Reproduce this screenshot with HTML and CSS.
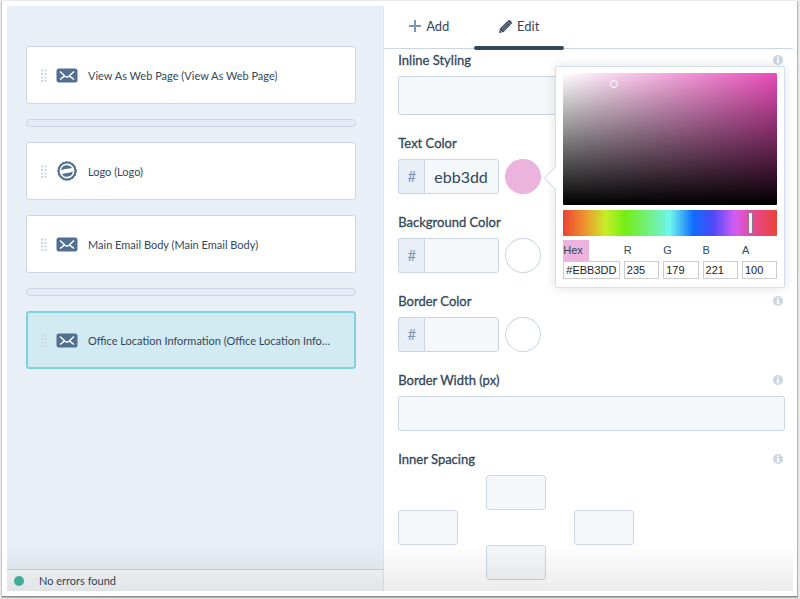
FILE: index.html
```html
<!DOCTYPE html>
<html lang="en">
<head>
    <meta charset="UTF-8">
    <meta name="viewport" content="width=device-width, initial-scale=1.0">
    <title>Email Editor</title>
    <link rel="stylesheet" href="styles.css">
</head>
<body>
    <svg width="0" height="0" class="sprite" aria-hidden="true">
        <symbol id="icon-mail" viewBox="0 0 22 15">
            <rect x="0.5" y="0.5" width="21" height="14" rx="2.5" fill="#516f90"/>
            <path d="M4 3.5l4.6 4.2M18 3.5l-4.6 4.2M4 11.5l4-3.2M18 11.5l-4-3.2M8 7.3c1.6 2.4 4.400 2.4 6 0" fill="none" stroke="#fff" stroke-width="1.5"/>
        </symbol>
        <symbol id="icon-drag" viewBox="0 0 6 13">
            <path d="M0 .5h2v2H0zM3.500 .5h2v2h-2zM0 4h2v2H0zM3.500 4h2v2h-2zM0 7.500h2v2H0zM3.500 7.500h2v2h-2zM0 11h2v2H0zM3.500 11h2v2h-2z" fill="#cbd6e2"/>
        </symbol>
        <symbol id="icon-info" viewBox="0 0 10 10">
            <circle cx="5" cy="5" r="5" fill="#cbd6e2"/>
            <path d="M4.200 1.600h1.700v1.500H4.200zM3.600 4h2.300v3.200h.6v1H3.600v-1h.6V5h-.6z" fill="#fff"/>
        </symbol>
    </svg>

    <div class="window">
        <div class="app">
            <section class="modules">
                <div class="module-list">
                    <div class="module">
                        <svg class="drag"><use href="#icon-drag"/></svg>
                        <svg class="module-icon"><use href="#icon-mail"/></svg>
                        <span class="module-name">View As Web Page (View As Web Page)</span>
                    </div>
                    <div class="divider"></div>
                    <div class="module">
                        <svg class="drag"><use href="#icon-drag"/></svg>
                        <svg class="module-icon logo" viewBox="0 0 20 20">
                            <circle cx="10" cy="10" r="8.400" fill="#fff" stroke="#516f90" stroke-width="2"/>
                            <circle cx="10" cy="10" r="9.300" fill="none" stroke="#516f90" stroke-width="1" stroke-dasharray="2 1.500"/>
                            <path d="M4.200 9.400C4.500 6 7 4.200 10 4.200c2.200 0 4 1 5 2.600-3 1.300-7 .6-10.800 2.600z" fill="#516f90"/>
                            <path d="M15.800 10.600c-.3 3.400-2.800 5.200-5.800 5.200-2.200 0-4-1-5-2.600 3-1.300 7-.6 10.800-2.600z" fill="#516f90"/>
                        </svg>
                        <span class="module-name">Logo (Logo)</span>
                    </div>
                    <div class="module">
                        <svg class="drag"><use href="#icon-drag"/></svg>
                        <svg class="module-icon"><use href="#icon-mail"/></svg>
                        <span class="module-name">Main Email Body (Main Email Body)</span>
                    </div>
                    <div class="divider"></div>
                    <div class="module selected">
                        <svg class="drag"><use href="#icon-drag"/></svg>
                        <svg class="module-icon"><use href="#icon-mail"/></svg>
                        <span class="module-name">Office Location Information (Office Location Information)</span>
                    </div>
                </div>
                <footer class="status"><span class="status-dot"></span>No errors found</footer>
            </section>

            <section class="editor">
                <nav class="tabs">
                    <button class="tab" type="button">
                        <svg width="12" height="12" viewBox="0 0 12 12"><path d="M6 0v12M0 6h12" stroke="#7c98b6" stroke-width="2"/></svg>
                        Add
                    </button>
                    <button class="tab active" type="button">
                        <svg width="13" height="13" viewBox="0 0 13 13">
                            <path d="M0 13l1-4.500L8.200 1.300l3.500 3.500L4.500 12z" fill="#33475b"/>
                            <path d="M9 .6c.7-.7 1.500-.7 2.200 0l1.200 1.200c.7.700.7 1.500 0 2.200l-.5.500L8.500 1.100z" fill="#33475b"/>
                            <path d="M2.500 9.200l6-6M3.900 10.600l6-6" stroke="#b4c0cc" stroke-width=".7"/>
                            <path d="M1.200 10.300l1.500 1.500" stroke="#fff" stroke-width=".7"/>
                        </svg>
                        Edit
                    </button>
                </nav>

                <form class="fields">
                    <div class="field">
                        <div class="field-head">
                            <label for="inline-styling">Inline Styling</label>
                            <svg class="info"><use href="#icon-info"/></svg>
                        </div>
                        <input class="box tall" type="text" id="inline-styling">
                    </div>

                    <div class="field">
                        <div class="field-head">
                            <label for="text-color">Text Color</label>
                        </div>
                        <div class="color-row">
                            <span class="hash">#</span>
                            <input class="box color-input" type="text" id="text-color" value="ebb3dd">
                            <button class="swatch filled" type="button" aria-label="Pick text color"></button>

                            <div class="picker">
                                <div class="saturation"><span class="handle"></span></div>
                                <div class="hue"><span class="slider"></span></div>
                                <div class="values">
                                    <div class="value">
                                        <label class="hex-label" for="hex">Hex</label>
                                        <input type="text" id="hex" value="#EBB3DD">
                                    </div>
                                    <div class="value">
                                        <label for="red">R</label>
                                        <input type="text" id="red" value="235">
                                    </div>
                                    <div class="value">
                                        <label for="green">G</label>
                                        <input type="text" id="green" value="179">
                                    </div>
                                    <div class="value">
                                        <label for="blue">B</label>
                                        <input type="text" id="blue" value="221">
                                    </div>
                                    <div class="value">
                                        <label for="alpha">A</label>
                                        <input type="text" id="alpha" value="100">
                                    </div>
                                </div>
                            </div>
                        </div>
                    </div>

                    <div class="field">
                        <div class="field-head">
                            <label for="background-color">Background Color</label>
                        </div>
                        <div class="color-row">
                            <span class="hash">#</span>
                            <input class="box color-input" type="text" id="background-color">
                            <button class="swatch" type="button" aria-label="Pick background color"></button>
                        </div>
                    </div>

                    <div class="field">
                        <div class="field-head">
                            <label for="border-color">Border Color</label>
                            <svg class="info"><use href="#icon-info"/></svg>
                        </div>
                        <div class="color-row">
                            <span class="hash">#</span>
                            <input class="box color-input" type="text" id="border-color">
                            <button class="swatch" type="button" aria-label="Pick border color"></button>
                        </div>
                    </div>

                    <div class="field">
                        <div class="field-head">
                            <label for="border-width">Border Width (px)</label>
                            <svg class="info"><use href="#icon-info"/></svg>
                        </div>
                        <input class="box" type="text" id="border-width">
                    </div>

                    <div class="field">
                        <div class="field-head">
                            <label for="spacing-top">Inner Spacing</label>
                            <svg class="info"><use href="#icon-info"/></svg>
                        </div>
                        <div class="spacing">
                            <input class="box top" type="text" id="spacing-top">
                            <input class="box left" type="text" aria-label="Left spacing">
                            <input class="box right" type="text" aria-label="Right spacing">
                            <input class="box bottom" type="text" aria-label="Bottom spacing">
                        </div>
                    </div>
                </form>
            </section>
        </div>
    </div>
</body>
</html>
```
FILE: styles.css
```css
* {
    box-sizing: border-box;
}
body {
    margin: 0;
    padding: 1px 2px 3px;
    min-height: 100vh;
    display: flex;
    background-color: #ebebeb;
    color: #33475b;
    font-family: Lato, sans-serif;
    font-size: 13px;
}
input, button {
    font-family: inherit;
    color: inherit;
    margin: 0;
}
.sprite {
    position: absolute;
}
.window {
    flex: 1;
    min-width: 0;
    display: flex;
    padding: 5px 4px 5px 5px;
    background-color: #fff;
    border-right: 1px solid #b5b5b5;
    border-bottom: 1px solid #8c8c8c;
    box-shadow: -1px 0 0 #c4c4c4, 0 1px 1px #b5b5b5;
}
.app {
    flex: 1;
    min-width: 0;
    display: flex;
    position: relative;
}
/* fade along the bottom edge */
.app::after {
    content: "";
    position: absolute;
    left: 0;
    right: 0;
    bottom: 0;
    height: 48px;
    background: linear-gradient(rgba(0, 0, 0, 0), rgba(0, 0, 0, 0.08));
    pointer-events: none;
}

/* module list */
.modules {
    flex: 0 0 48%;
    min-width: 0;
    display: flex;
    flex-direction: column;
    background-color: #e8eff7;
    border-right: 1px solid #dfe6f0;
}
.module-list {
    flex: 1;
    display: flex;
    flex-direction: column;
    gap: 15px;
    padding: 40px 27px 20px 19px;
}
.module {
    height: 58px;
    display: flex;
    align-items: center;
    padding: 0 24px 0 14px;
    background-color: #fff;
    border: 1px solid #cbd6e2;
    border-radius: 3px;
}
.module.selected {
    padding: 0 23px 0 13px;
    background-color: #d2eaf1;
    border: 2px solid #7fd1de;
}
.drag {
    flex: none;
    width: 6px;
    height: 13px;
    margin-right: 9px;
}
.module-icon {
    flex: none;
    width: 22px;
    height: 15px;
    margin-right: 10px;
}
.module-icon.logo {
    height: 20px;
}
.module-name {
    font-size: 11px;
    overflow: hidden;
    white-space: nowrap;
    text-overflow: ellipsis;
}
.divider {
    height: 8px;
    background-color: #e5ebf5;
    border: 1px solid #cbd6e2;
    border-radius: 4px;
}
.status {
    height: 22px;
    display: flex;
    align-items: center;
    padding-left: 7px;
    background-color: #f5f8fa;
    border-top: 1px solid #cbd6e2;
    font-size: 11px;
}
.status-dot {
    width: 10px;
    height: 10px;
    margin-right: 15px;
    background-color: #45b79f;
    border-radius: 50%;
}

/* tabs */
.editor {
    flex: 1;
    min-width: 0;
    background-color: #fff;
}
.tabs {
    display: flex;
    height: 43px;
    border-bottom: 1px solid #cbd6e2;
}
.tab {
    width: 90px;
    height: 43px;
    display: flex;
    align-items: center;
    justify-content: center;
    gap: 5px;
    padding: 0 0 3px;
    background: none;
    border: none;
    font-size: 13px;
    cursor: pointer;
}
.tab.active {
    position: relative;
}
.tab.active::after {
    content: "";
    position: absolute;
    left: 0;
    right: 0;
    bottom: -1px;
    height: 4px;
    background-color: #33475b;
    border-radius: 2px;
}

/* fields */
.fields {
    display: flex;
    flex-direction: column;
    gap: 20px;
    padding: 3px 8px 11px 14px;
}
.field-head {
    display: flex;
    align-items: center;
    justify-content: space-between;
    height: 16px;
    margin-bottom: 8px;
    line-height: 16px;
    -webkit-text-stroke: 0.3px #33475b;
}
.info {
    width: 10px;
    height: 10px;
    margin-right: 2px;
}
.box {
    display: block;
    width: 100%;
    height: 35px;
    padding: 0 9px;
    background-color: #f5f8fa;
    border: 1px solid #cbd6e2;
    border-radius: 3px;
    font-size: 16px;
}
.box.tall {
    height: 39px;
}
.color-row {
    position: relative;
    display: flex;
}
.hash {
    width: 26px;
    height: 35px;
    line-height: 33px;
    text-align: center;
    color: #7c98b6;
    background-color: #e8eff7;
    border: 1px solid #cbd6e2;
    border-right: none;
    border-radius: 3px 0 0 3px;
    font-size: 15px;
}
.color-input {
    width: 75px;
    border-radius: 0 3px 3px 0;
}
.swatch {
    width: 36px;
    height: 35px;
    margin-left: 6px;
    background-color: #fff;
    border: 1px solid #cbd6e2;
    border-radius: 50%;
    cursor: pointer;
}
.swatch.filled {
    background-color: #ebb3dd;
    border-color: #ebb3dd;
}

/* color picker */
.picker {
    position: absolute;
    left: 157px;
    top: -93px;
    width: 230px;
    z-index: 1;
    padding: 6px 7px 8px;
    background-color: #fff;
    border: 1px solid #d3dfea;
    border-radius: 2px;
    box-shadow: 0 0 12px rgba(0, 0, 0, 0.12);
}
.picker::before {
    content: "";
    position: absolute;
    left: -9px;
    top: 103px;
    width: 15px;
    height: 15px;
    background-color: #fff;
    border-left: 1px solid #d3dfea;
    border-bottom: 1px solid #d3dfea;
    transform: rotate(45deg);
}
.saturation {
    position: relative;
    height: 132px;
    background: linear-gradient(to top, #000, rgba(0, 0, 0, 0)), linear-gradient(to right, #fff, #e84cb8);
    border-radius: 1px;
}
.handle {
    position: absolute;
    left: 47px;
    top: 7px;
    width: 8px;
    height: 8px;
    border: 1px solid #fff;
    border-radius: 50%;
}
.hue {
    position: relative;
    height: 26px;
    margin: 5px 0 4px;
    background: linear-gradient(to right, #ea4335 0%, #f0922e 10%, #c6ee27 20%, #74ee15 29%, #72f08c 41%, #6df6ee 50%, #0f6bff 61%, #4c49f8 70%, #d05cf5 80%, #e8489c 88%, #ea4335 100%);
    border-radius: 1px;
}
.slider {
    position: absolute;
    left: 185px;
    top: 2px;
    width: 5px;
    height: 22px;
    background-color: #f0f0f0;
    border: 1px solid #8c7a8c;
    border-radius: 1px;
}
.values {
    display: flex;
    gap: 4px;
    font-family: "Liberation Sans", Arial, sans-serif;
    font-size: 11px;
}
.value {
    flex: 35;
    min-width: 0;
}
.value:first-child {
    flex: 56;
}
.value label {
    display: block;
    height: 21px;
    line-height: 20px;
}
.value .hex-label {
    width: 26px;
    background-color: #ebb3dd;
}
.value input {
    display: block;
    width: 100%;
    height: 18px;
    padding: 0 2px;
    background-color: #fff;
    border: 1px solid #ccc;
    color: #222;
    font-size: 11px;
}

/* inner spacing */
.spacing {
    display: grid;
    grid-template-columns: 60px 60px 60px;
    grid-template-areas: ". top ." "left . right" ". bottom .";
    column-gap: 28px;
}
.top {
    grid-area: top;
}
.left {
    grid-area: left;
}
.right {
    grid-area: right;
}
.bottom {
    grid-area: bottom;
}
```
